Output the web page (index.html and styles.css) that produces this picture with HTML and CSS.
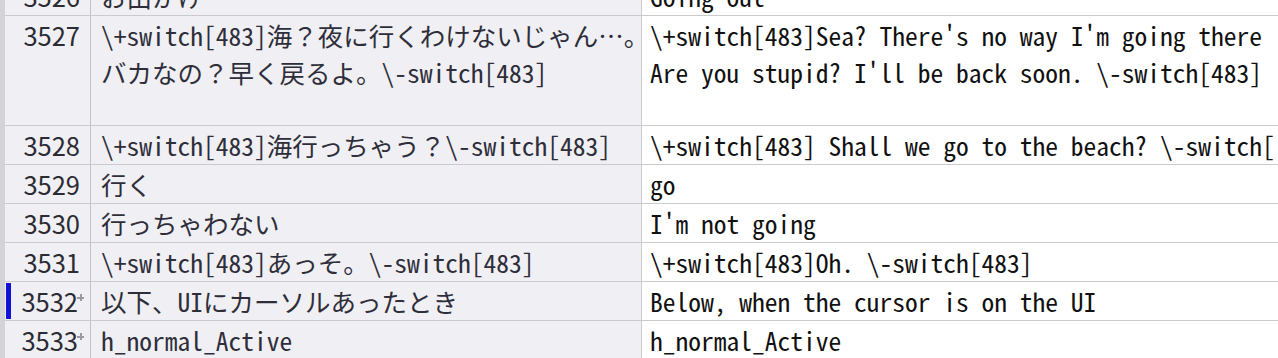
FILE: index.html
```html
<!DOCTYPE html>
<html lang="ja">
<head>
<meta charset="utf-8">
<title>Translation grid</title>
<link rel="stylesheet" href="styles.css">
</head>
<body>
<div class="viewport">
  <div class="grid">
    <div class="row row-cut">
      <div class="num">3526</div>
      <div class="src">お出かけ</div>
      <div class="dst"><span class="clip">Going out</span></div>
    </div>
    <div class="row row-tall">
      <div class="num">3527</div>
      <div class="src">\+switch[483]海？夜に行くわけないじゃん…。
バカなの？早く戻るよ。\-switch[483]</div>
      <div class="dst"><span class="clip">\+switch[483]Sea? There's no way I'm going there
Are you stupid? I'll be back soon. \-switch[483]</span></div>
    </div>
    <div class="row">
      <div class="num">3528</div>
      <div class="src">\+switch[483]海行っちゃう？\-switch[483]</div>
      <div class="dst"><span class="clip">\+switch[483] Shall we go to the beach? \-switch[483]</span></div>
    </div>
    <div class="row">
      <div class="num">3529</div>
      <div class="src">行く</div>
      <div class="dst"><span class="clip">go</span></div>
    </div>
    <div class="row">
      <div class="num">3530</div>
      <div class="src">行っちゃわない</div>
      <div class="dst"><span class="clip">I'm not going</span></div>
    </div>
    <div class="row">
      <div class="num">3531</div>
      <div class="src">\+switch[483]あっそ。\-switch[483]</div>
      <div class="dst"><span class="clip">\+switch[483]Oh. \-switch[483]</span></div>
    </div>
    <div class="row">
      <div class="num num-flag"><span class="mark"></span>3532<span class="plus"></span></div>
      <div class="src">以下、UIにカーソルあったとき</div>
      <div class="dst"><span class="clip">Below, when the cursor is on the UI</span></div>
    </div>
    <div class="row">
      <div class="num num-flag">3533<span class="plus"></span></div>
      <div class="src">h_normal_Active</div>
      <div class="dst"><span class="clip">h_normal_Active</span></div>
    </div>
  </div>
</div>
</body>
</html>
```
FILE: styles.css
```css
html, body {
  margin: 0;
  padding: 0;
  background: #ffffff;
}
.viewport {
  width: 1278px;
  height: 358px;
  overflow: hidden;
  border-left: 5px solid #d4d4d8;
  box-sizing: border-box;
}
.grid {
  margin-top: -23px;
  font-family: "Noto Sans Mono CJK JP", "Noto Sans CJK JP", monospace;
  font-size: 25.5px;
  line-height: 37px;
}
.row {
  display: grid;
  grid-template-columns: 86px 551px 1fr;
  border-bottom: 1px solid #cbcbcf;
  height: 38px;
}
.row-tall {
  height: 109px;
}
.num, .src, .dst {
  overflow: hidden;
  box-sizing: border-box;
}
.num {
  position: relative;
  background: #f0eff3;
  border-right: 1px solid #c4c4c8;
  text-align: right;
  padding-right: 10px;
  font-family: "Noto Sans CJK JP", sans-serif;
  color: #2b2b33;
}
.num-flag {
  padding-right: 12px;
}
.src {
  background: #f0eff3;
  border-right: 1px solid #cbcbcf;
  padding-left: 10px;
  color: #2e2e3a;
  white-space: pre;
}
.dst {
  background: #ffffff;
  padding-left: 8px;
  padding-right: 3px;
  color: #111111;
}
.clip {
  display: block;
  white-space: pre;
  overflow: hidden;
}
.mark {
  position: absolute;
  left: 1px;
  top: 1px;
  width: 5px;
  height: 36px;
  background: #1212d6;
}
.plus {
  position: absolute;
  right: 6px;
  top: 12px;
  width: 7px;
  height: 7px;
  background:
    linear-gradient(#9a9aa0, #9a9aa0) center / 7px 2px no-repeat,
    linear-gradient(#9a9aa0, #9a9aa0) center / 2px 7px no-repeat;
}
```
